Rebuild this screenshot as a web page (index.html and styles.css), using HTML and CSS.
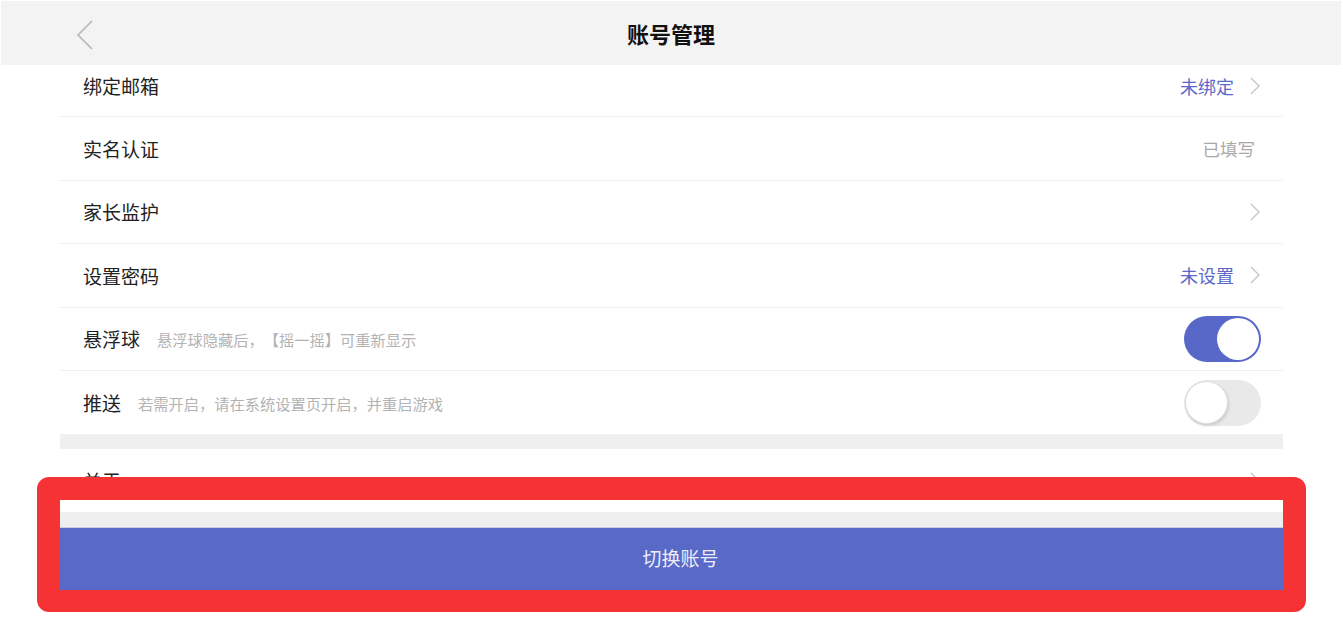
FILE: index.html
```html
<!DOCTYPE html>
<html lang="zh-CN">
<head>
    <meta charset="UTF-8">
    <meta name="viewport" content="width=device-width, initial-scale=1.0">
    <title>账号管理</title>
    <link rel="stylesheet" href="styles.css">
</head>
<body>
    <div class="page">
        <!-- Top bar -->
        <header class="topbar">
            <span class="back">
                <svg width="18" height="30" viewBox="0 0 18 30">
                    <path d="M16 1 L2 15 L16 29" fill="none" stroke="#b4b6bd" stroke-width="1.6"/>
                </svg>
            </span>
            <h1 class="title">账号管理</h1>
        </header>

        <!-- Settings list -->
        <div class="list">
            <div class="row row-first">
                <span class="label">绑定邮箱</span>
                <span class="value blue">未绑定</span>
                <span class="arrow"><svg width="10" height="18" viewBox="0 0 10 18"><path d="M1 1 L9 9 L1 17" fill="none" stroke="#c4c6cc" stroke-width="1.4"/></svg></span>
            </div>
            <div class="row">
                <span class="label">实名认证</span>
                <span class="value gray">已填写</span>
            </div>
            <div class="row">
                <span class="label">家长监护</span>
                <span class="arrow"><svg width="10" height="18" viewBox="0 0 10 18"><path d="M1 1 L9 9 L1 17" fill="none" stroke="#c4c6cc" stroke-width="1.4"/></svg></span>
            </div>
            <div class="row">
                <span class="label">设置密码</span>
                <span class="value blue">未设置</span>
                <span class="arrow"><svg width="10" height="18" viewBox="0 0 10 18"><path d="M1 1 L9 9 L1 17" fill="none" stroke="#c4c6cc" stroke-width="1.4"/></svg></span>
            </div>
            <div class="row">
                <span class="label">悬浮球</span>
                <span class="hint">悬浮球隐藏后，【摇一摇】可重新显示</span>
                <span class="switch on"><span class="knob"></span></span>
            </div>
            <div class="row row-last">
                <span class="label">推送</span>
                <span class="hint">若需开启，请在系统设置页开启，并重启游戏</span>
                <span class="switch"><span class="knob"></span></span>
            </div>

            <div class="band"></div>

            <div class="row row-last">
                <span class="label">关于</span>
                <span class="arrow"><svg width="10" height="18" viewBox="0 0 10 18"><path d="M1 1 L9 9 L1 17" fill="none" stroke="#c4c6cc" stroke-width="1.4"/></svg></span>
            </div>

            <div class="band"></div>

            <button class="switch-btn" type="button">切换账号</button>
        </div>

        <!-- highlight frame -->
        <div class="mark"></div>
    </div>
</body>
</html>
```

FILE: styles.css
```css
body {
    margin: 0;
    background: #ffffff;
    font-family: "Noto Sans CJK SC", "Noto Sans", sans-serif;
}

.page {
    position: relative;
    width: 1343px;
    height: 620px;
    padding-top: 1px;
    box-sizing: border-box;
    overflow: hidden;
}

.topbar {
    display: flex;
    align-items: center;
    justify-content: center;
    position: relative;
    height: 64px;
    margin: 0 2px 0 1px;
    background: #f3f3f3;
}

.back {
    position: absolute;
    left: 75px;
    top: 19px;
    display: flex;
}

.title {
    margin: 0;
    font-size: 22px;
    font-weight: 700;
    color: #111111;
}

.list {
    display: flex;
    flex-direction: column;
    margin: 0 60px;
}

.row {
    display: flex;
    align-items: center;
    height: 63.5px;
    padding: 0 23px;
    border-bottom: 1px solid #efefef;
    box-sizing: border-box;
}

.row-first {
    height: 52px;
    padding-bottom: 10px;
}

.row-last {
    border-bottom: none;
    height: 63px;
}

.label {
    font-size: 19px;
    color: #222222;
}

.hint {
    margin-left: 17px;
    font-size: 15.25px;
    color: #b3b3b3;
    text-spacing-trim: space-all;
    font-feature-settings: "halt" 0;
}

.value {
    margin-left: auto;
}

.value.blue {
    font-size: 18px;
    color: #5a68cb;
}

.value.gray {
    margin-right: 5px;
    font-size: 17.5px;
    color: #a9a9a9;
}

.arrow {
    display: flex;
    margin-left: 16px;
}

.row .label + .arrow {
    margin-left: auto;
}

.switch {
    position: relative;
    margin-left: auto;
    margin-right: -1px;
    width: 77px;
    height: 46px;
    border-radius: 23px;
    background: #e9e9ea;
    box-sizing: border-box;
}

.switch .knob {
    position: absolute;
    left: 1px;
    top: 1px;
    width: 43px;
    height: 43px;
    border-radius: 50%;
    background: #ffffff;
    border: 1px solid #dcdcdc;
    box-sizing: border-box;
    box-shadow: 1px 2px 3px rgba(0, 0, 0, 0.12);
}

.switch.on {
    background: #5868c8;
}

.switch.on .knob {
    left: auto;
    right: 2px;
    top: 2px;
    width: 42px;
    height: 42px;
    border: none;
    box-shadow: none;
}

.band {
    height: 15px;
    background: #efefef;
}

.switch-btn {
    height: 63px;
    padding: 0 0 4px 18px;
    border: none;
    border-top: 1px solid #c9cce6;
    background: #5869c8;
    color: #eceef9;
    font-family: inherit;
    font-size: 19px;
}

.mark {
    position: absolute;
    left: 37px;
    top: 477px;
    width: 1269px;
    height: 135px;
    border: 23px solid #f53334;
    border-bottom-width: 22px;
    border-radius: 12px;
    box-sizing: border-box;
}
```
